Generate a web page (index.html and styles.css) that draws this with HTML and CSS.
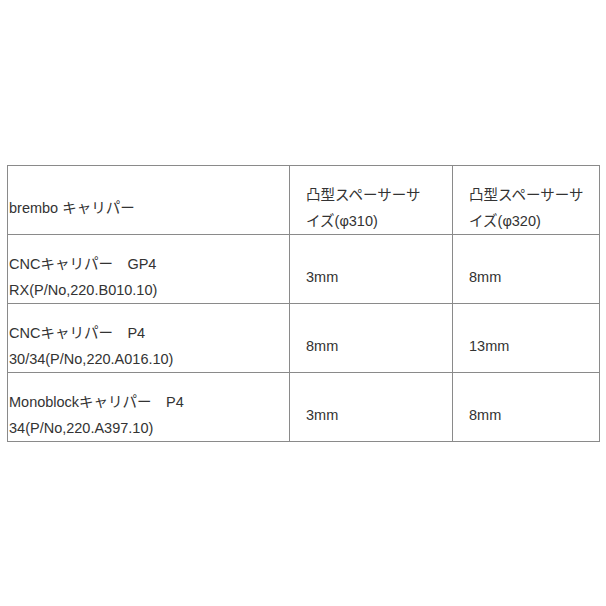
FILE: index.html
```html
<!DOCTYPE html>
<html lang="ja">
<head>
<meta charset="utf-8">
<title>brembo キャリパー</title>
<link rel="stylesheet" href="styles.css">
</head>
<body>
<div class="page">
  <table class="spec">
    <colgroup>
      <col class="c1">
      <col class="c2">
      <col class="c3">
    </colgroup>
    <tr class="row">
      <td class="name">brembo キャリパー</td>
      <td class="val">凸型スペーサーサ<br>イズ(φ310)</td>
      <td class="val">凸型スペーサーサ<br>イズ(φ320)</td>
    </tr>
    <tr class="row">
      <td class="name">CNCキャリパー　GP4<br>RX(P/No,220.B010.10)</td>
      <td class="val">3mm</td>
      <td class="val">8mm</td>
    </tr>
    <tr class="row">
      <td class="name">CNCキャリパー　P4<br>30/34(P/No,220.A016.10)</td>
      <td class="val">8mm</td>
      <td class="val">13mm</td>
    </tr>
    <tr class="row">
      <td class="name">Monoblockキャリパー　P4<br>34(P/No,220.A397.10)</td>
      <td class="val">3mm</td>
      <td class="val">8mm</td>
    </tr>
  </table>
</div>
</body>
</html>
```

FILE: styles.css
```css
html, body {
  margin: 0;
  padding: 0;
  background: #ffffff;
}

.page {
  padding: 165px 7px 0 7px;
}

.spec {
  border-collapse: collapse;
  table-layout: fixed;
  width: 592px;
  font-family: "Liberation Sans", "Noto Sans CJK JP", sans-serif;
  font-size: 14.5px;
  line-height: 26px;
  color: #333333;
}

.c1 { width: 282px; }
.c2 { width: 163px; }
.c3 { width: 147px; }

.row {
  height: 69px;
}

.spec td {
  border: 1px solid #8a8a8a;
  vertical-align: middle;
  padding-top: 16px;
  padding-bottom: 0;
  white-space: nowrap;
}

.name {
  padding-left: 1px;
  padding-right: 4px;
}

.val {
  padding-left: 16px;
  padding-right: 4px;
}
```
